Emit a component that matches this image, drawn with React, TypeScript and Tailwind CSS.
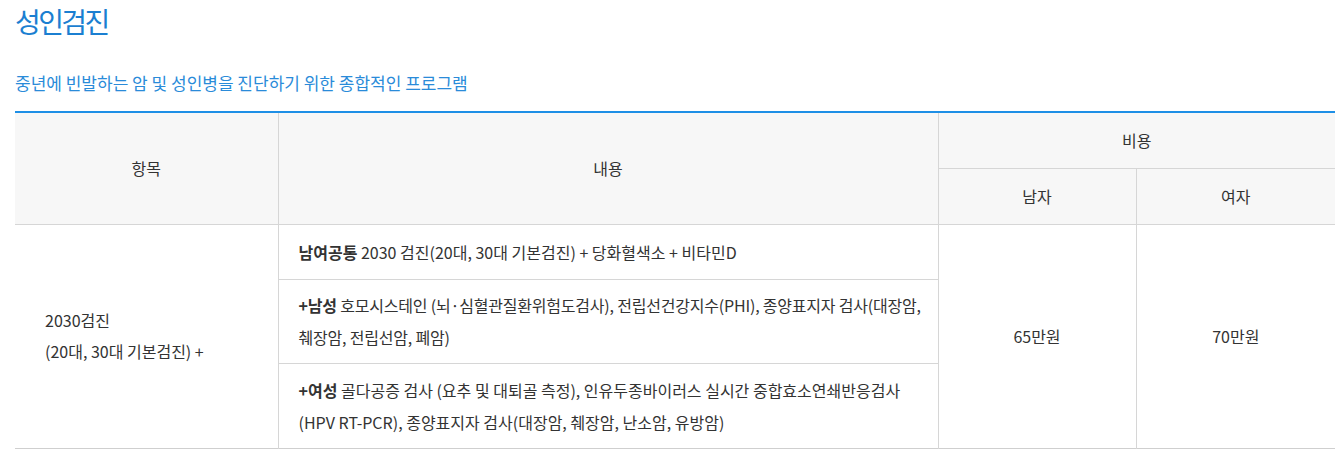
export default function App() {
  const font = { fontFamily: '"Noto Sans CJK KR", "Noto Sans", sans-serif' };
  return (
    <div className="bg-white w-[1344px] h-[462px] px-[15px] pr-[9px] text-[#333]" style={font}>
      <h2 className="text-[28px] leading-[40px] pt-[1px] text-[#1b7fd1] tracking-[-2.6px]">성인검진</h2>
      <p className="mt-[29px] text-[17px] leading-[26px] text-[#2a8bd9]">
        중년에 빈발하는 암 및 성인병을 진단하기 위한 종합적인 프로그램
      </p>
      <table className="mt-[15px] w-[1320px] border-collapse border-t-2 border-t-[#1e8fe6] border-b border-b-[#cfcfcf] text-[16px] table-fixed">
        <colgroup>
          <col className="w-[263px]" />
          <col className="w-[660px]" />
          <col className="w-[198px]" />
          <col className="w-[199px]" />
        </colgroup>
        <thead>
          <tr className="bg-[#f7f7f7] h-[56px]">
            <th rowSpan={2} className="font-normal border-r border-b border-[#d6d6d6]">항목</th>
            <th rowSpan={2} className="font-normal border-r border-b border-[#d6d6d6]">내용</th>
            <th colSpan={2} className="font-normal border-b border-[#d6d6d6]">비용</th>
          </tr>
          <tr className="bg-[#f7f7f7] h-[56px]">
            <th className="font-normal border-r border-b border-[#d6d6d6]">남자</th>
            <th className="font-normal border-b border-[#d6d6d6]">여자</th>
          </tr>
        </thead>
        <tbody className="leading-[32px]">
          <tr className="h-[55px]">
            <td rowSpan={3} className="pl-[30px] border-r border-[#d6d6d6] leading-[31px]">
              2030검진
              <br />
              (20대, 30대 기본검진) +
            </td>
            <td className="px-[20px] border-r border-b border-[#d6d6d6] whitespace-nowrap">
              <b className="font-bold">남여공통</b> 2030 검진(20대, 30대 기본검진) + 당화혈색소 + 비타민D
            </td>
            <td rowSpan={3} className="text-center border-r border-[#d6d6d6]">65만원</td>
            <td rowSpan={3} className="text-center">70만원</td>
          </tr>
          <tr className="h-[84px]">
            <td className="pl-[20px] pr-0 border-r border-b border-[#d6d6d6] whitespace-nowrap tracking-[-0.2px]">
              <b className="font-bold">+남성</b> 호모시스테인 (뇌·심혈관질환위험도검사), 전립선건강지수(PHI), 종양표지자 검사(대장암,
              <br />
              췌장암, 전립선암, 폐암)
            </td>
          </tr>
          <tr className="h-[85px]">
            <td className="px-[20px] border-r border-[#d6d6d6] whitespace-nowrap">
              <b className="font-bold">+여성</b> 골다공증 검사 (요추 및 대퇴골 측정), 인유두종바이러스 실시간 중합효소연쇄반응검사
              <br />
              (HPV RT-PCR), 종양표지자 검사(대장암, 췌장암, 난소암, 유방암)
            </td>
          </tr>
        </tbody>
      </table>
    </div>
  );
}
